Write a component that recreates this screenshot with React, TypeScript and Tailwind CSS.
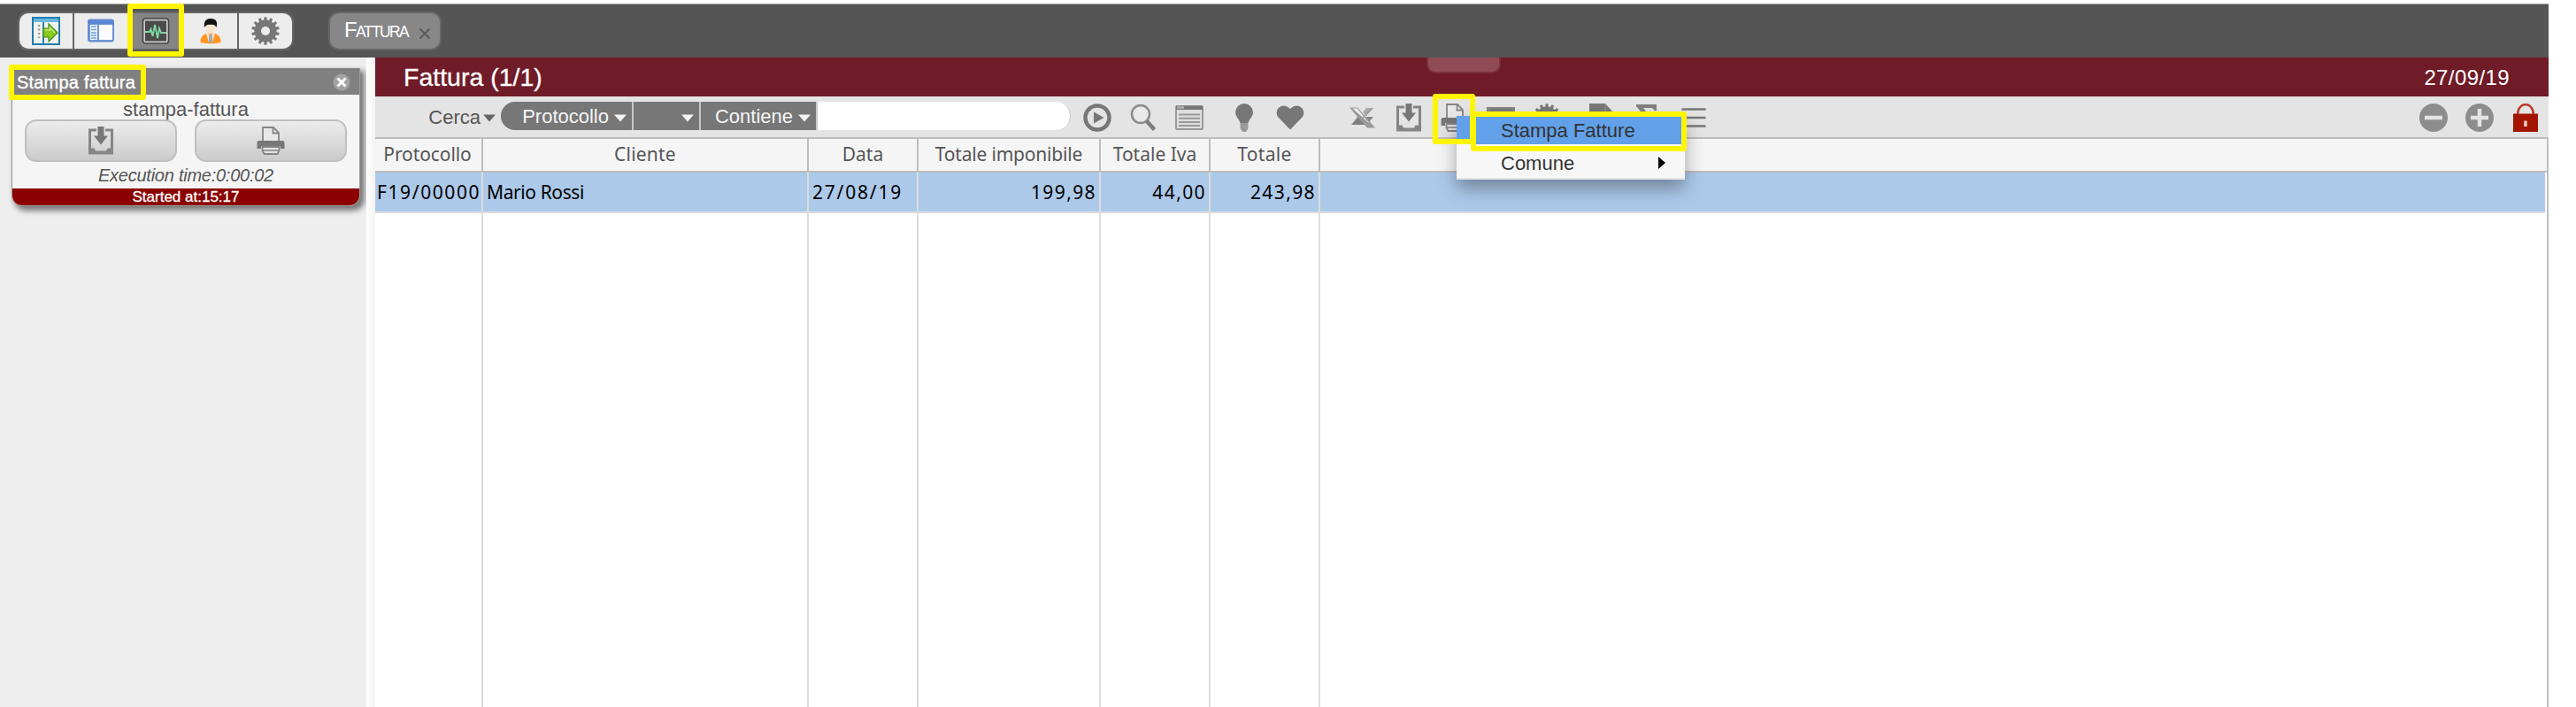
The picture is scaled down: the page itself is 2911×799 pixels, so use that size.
import React from "react";

const ARIAL = "font-['Liberation_Sans',Arial,sans-serif]";
const GRID = "font-['Noto_Sans','Open_Sans',sans-serif]";

function gearPath(teeth: number, outer: number, inner: number) {
  const pts: string[] = [];
  for (let i = 0; i < teeth; i++) {
    const step = (Math.PI * 2) / teeth;
    const a = i * step - Math.PI / 2;
    const corners: [number, number][] = [
      [-0.3, inner],
      [-0.2, outer],
      [0.2, outer],
      [0.3, inner],
    ];
    corners.forEach(([k, r]) => {
      pts.push(`${(16 + r * Math.cos(a + k * step)).toFixed(2)},${(16 + r * Math.sin(a + k * step)).toFixed(2)}`);
    });
  }
  return `M${pts.join("L")}Z`;
}

function Icon({ children, className = "" }: { children?: React.ReactNode; className?: string }) {
  return (
    <svg viewBox="0 0 32 32" className={`block h-8 w-8 shrink-0 ${className}`}>
      {children}
    </svg>
  );
}

const Gear = ({ hole = "#ededed" }: { hole?: string }) => (
  <Icon>
    <path d={gearPath(14, 15.8, 12.6)} fill="#777" />
    <circle cx="16" cy="16" r="5" fill={hole} />
  </Icon>
);

const Download = () => (
  <Icon>
    <path d="M2 2.500h9v3H5v19h3.500l1.500 3h12l1.500-3H27v-19h-6v-3h9v29H2Z" fill="#858585" />
    <path d="M12.500 0h7v10.500h4.500L16 20.500 8 10.500h4.500Z" fill="#777" />
  </Icon>
);

const Printer = () => (
  <Icon>
    <path d="M7 17V1h12l6 6v10" fill="#e9e9e9" stroke="#858585" strokeWidth="1.800" />
    <path d="M18.500 1v6.500H25" fill="none" stroke="#858585" strokeWidth="1.800" />
    <path d="M3 16h26a2.500 2.500 0 0 1 2.500 2.500V25h-4.500v-3H5v3H.5v-6.500A2.500 2.500 0 0 1 3 16Z" fill="#777" />
    <path d="M6.500 23h19v4l-2 4h-15l-2-4Z" fill="#e4e4e4" stroke="#858585" strokeWidth="1.800" />
    <path d="M7 27h18" stroke="#858585" strokeWidth="1.500" />
  </Icon>
);

const Caret = ({ className }: { className: string }) => (
  <svg viewBox="0 0 14 9" className={`block h-[9px] w-[14px] shrink-0 ${className}`}>
    <path d="M0 .5h14L7 8.500Z" fill="currentColor" />
  </svg>
);

function TopBar() {
  return (
    <header className="flex h-[61px] w-[2880px] border-t border-[#a8a8a8] bg-[#555] pl-5 pt-2">
      <div className="flex h-[44px] w-[312px] gap-[2px] overflow-hidden rounded-xl border-2 border-[#666] bg-[#666]">
        <div className="flex w-[60px] items-center justify-center bg-[#ededed]">
          <Icon>
            <rect x="1" y="1" width="30" height="30" fill="#f2f2f0" stroke="#207cad" strokeWidth="2" />
            <path d="M2 2h28v4H2Z" fill="#68b9e2" />
            <path d="M13 6v24" stroke="#2682b3" strokeWidth="2" />
            <path d="M8 9v15" stroke="#999" strokeWidth="2.500" strokeDasharray="2 2.500" />
            <path d="M13 13h6V8l10 10-10 10v-5h-6Z" fill="#8cc820" stroke="#3c8b13" strokeWidth="1.200" />
            <path d="M14.500 15h6v-3l5.500 6" fill="none" stroke="#c5e777" strokeWidth="1.500" />
          </Icon>
        </div>
        <div className="flex w-[60px] items-center justify-center bg-[#ededed]">
          <Icon>
            <rect x="1.500" y="3" width="29" height="25" rx="2" fill="#7095d2" stroke="#6289cb" strokeWidth="1" />
            <path d="M2 4h28v4H2Z" fill="#5a86d0" />
            <path d="M4 9h8v17H4Z" fill="#eef4fc" />
            <path d="M14 9h15v17H14Z" fill="#fafbfe" />
            <path d="M5 11h6M5 14.500h6M5 18h6M5 21h6M5 24h6" stroke="#6f9ed8" strokeWidth="1.500" />
          </Icon>
        </div>
        <div className="flex w-[60px] items-center justify-center bg-[#858585]">
          <Icon>
            <rect x="1.500" y="2" width="29" height="28" rx="3" fill="#ccc" stroke="#444" strokeWidth="1.600" />
            <rect x="4" y="4.500" width="24" height="23" fill="#4a4a4a" />
            <path d="M4 17h5l1.500-3 2 8L15 9l3 15 2-11 2 5h6" fill="none" stroke="#7fd6a0" strokeWidth="1.900" />
          </Icon>
        </div>
        <div className="flex w-[60px] items-center justify-center bg-[#ededed]">
          <Icon>
            <path d="M4.500 29c0-7 4-11 11.500-11s11.500 4 11.500 11Q16 31.500 4.500 29Z" fill="#ff951f" />
            <path d="m12 17 4 6 4-6 1 2-3 10h-4l-3-10Z" fill="#f5e6d8" />
            <path d="m14.500 20h3l1 9h-5Z" fill="#a5a9ae" />
            <ellipse cx="16" cy="12.500" rx="5.800" ry="7" fill="#f7e3cd" />
            <path d="M9 12C8 5 11 1.500 16.500 2 22 2 24.500 6 22.500 12 21 9 19 8.500 16 9c-3-.5-5 0-7 3Z" fill="#111" />
          </Icon>
        </div>
        <div className="flex w-[60px] items-center justify-center bg-[#ededed]">
          <Gear />
        </div>
      </div>
      <div className="ml-[39px] flex h-[44px] w-[128px] items-center rounded-xl border-2 border-[#666] bg-[#878787] pl-[16px] text-white">
        <span className="w-[74px] whitespace-nowrap text-[24px] leading-10 tracking-[-1.6px]">
          F<span className="text-[17.500px]">ATTURA</span>
        </span>
        <svg viewBox="0 0 14 14" className="ml-[10px] mt-[5px] block h-[14px] w-[14px] shrink-0">
          <path d="m1.500 1.500 11 11m0-11-11 11" stroke="#5b5b5b" strokeWidth="2" />
        </svg>
      </div>
    </header>
  );
}

function CardButton({ children }: { children: React.ReactNode }) {
  return (
    <button className="flex h-[48px] w-[172px] items-center justify-center rounded-[13px] border-2 border-[#bfbfbf] bg-linear-to-b from-[#ececec] to-[#cbcbcb]">
      {children}
    </button>
  );
}

function Sidebar() {
  return (
    <aside className="w-[414px] bg-[#eee] pl-[13px] pt-3">
      <section className="flex h-[156px] w-[394px] flex-col overflow-hidden rounded-b-[12px] border-x border-b border-[#999] bg-[#f5f5f5] shadow-[4px_4px_6px_1px_#777]">
        <div className="flex h-[30px] shrink-0 items-center justify-between bg-[#808080] pl-[5px] pr-[10px] pt-[2px]">
          <span className="whitespace-nowrap text-[20px] leading-[30px] tracking-[0.2px] text-white [-webkit-text-stroke:0.4px_white]">Stampa fattura</span>
          <svg viewBox="0 0 20 20" className="block h-5 w-5">
            <circle cx="10" cy="10" r="9.500" fill="#a2a2a2" />
            <path d="m5.500 5.500 9 9m0-9-9 9" stroke="#fff" strokeWidth="3" />
          </svg>
        </div>
        <div className="h-[28px] pt-[3px] text-center text-[22px] leading-[28px] text-[#555]">stampa-fattura</div>
        <div className="flex shrink-0 gap-5 pl-[14px]">
          <CardButton><Download /></CardButton>
          <CardButton><Printer /></CardButton>
        </div>
        <div className="h-[30px] text-center text-[20px] italic leading-[31px] tracking-[-0.25px] text-[#555]">Execution time:0:00:02</div>
        <div className="flex-1 bg-[#8b0000] text-center text-[17px] leading-[20px] text-white [-webkit-text-stroke:0.3px_white]">Started at:15:17</div>
      </section>
    </aside>
  );
}

function Toolbar() {
  const seg = "flex items-center justify-end bg-[#777] text-[22px] leading-8 text-[#f5f5f5]";
  return (
    <div className="flex h-[46px] shrink-0 items-start bg-[#e4e4e4] pt-[6px]">
      <div className="flex h-8 w-[142px] items-center justify-end pr-[6px] text-[22px] text-[#555]">
        <span className="mr-[3px] mt-[2px]">Cerca</span>
        <Caret className="mt-1 text-[#666]" />
      </div>
      <div className="flex h-8 w-[644px] gap-[2px] overflow-hidden rounded-full border-r border-[#c4c4c4] bg-[#c8c8c8]">
        <div className={`${seg} w-[148px] pr-[6px]`}>
          <span className="mr-[6px] mt-[2px]">Protocollo</span>
          <Caret className="mt-1" />
        </div>
        <div className={`${seg} w-[74px] pr-[6px]`}><Caret className="mt-1" /></div>
        <div className={`${seg} w-[130px] pr-[6px]`}>
          <span className="mr-[6px] mt-[2px]">Contiene</span>
          <Caret className="mt-1" />
        </div>
        <div className="flex-1 bg-white" />
      </div>
      <div className="mt-[2px] flex gap-5 pl-[14px]">
        <Icon>
          <circle cx="16" cy="16" r="13.500" fill="none" stroke="#777" strokeWidth="4.500" />
          <path d="M12 9.500v13L23.500 16Z" fill="#777" />
        </Icon>
        <Icon>
          <circle cx="13" cy="12" r="10" fill="#e9e9e9" stroke="#8c8c8c" strokeWidth="2.500" />
          <path d="m20 20 8.500 9.500" stroke="#7c7c7c" strokeWidth="4.500" />
        </Icon>
        <Icon>
          <rect x="1" y="3" width="30" height="26" rx="1" fill="#dedede" stroke="#999" strokeWidth="2" />
          <path d="M1 2.500h30v4.500H1Z" fill="#777" />
          <path d="M2 3h8v3H2Z" fill="#aaa" />
          <path d="M4 12.500h24M4 16.700h24M4 20.900h24M4 25h24" stroke="#999" strokeWidth="2" />
        </Icon>
      </div>
      <div className="mt-[2px] flex gap-5 pl-[30px]">
        <Icon>
          <path d="M16 0a10 10 0 0 1 10 10c0 5-4.500 7.500-5.500 12h-9C10.500 17.500 6 15 6 10A10 10 0 0 1 16 0Z" fill="#777" />
          <path d="M11.500 22h9v6l-2.500 4h-4l-2.500-4Z" fill="#999" />
        </Icon>
        <Icon>
          <path d="M16 29.500 2 15C-3 7 7-3 16 6c9-9 19 1 14 9Z" fill="#777" />
        </Icon>
      </div>
      <div className="mt-[2px] flex gap-5 pl-[50px]">
        <Icon>
          <path d="M3 24 12 13l9 11Z" fill="#808080" />
          <path d="M20 5h8l-8 9-4-4Z" fill="#aaa" />
          <path d="M18 15h10l-5 6Z" fill="#888" />
          <path d="M1 4.500h9L30 27.500h-9Z" fill="#999" />
          <path d="M4.500 5.500h5L24 23Z" fill="#eee" />
          <path d="M27 5 13 19" stroke="#999" strokeWidth="1.500" />
        </Icon>
        <Download />
        <Printer />
        <Icon>
          <path d="M0 4h32v24H0Z" fill="#858585" />
          <path d="M3 7h26" stroke="#777" strokeWidth="2" />
        </Icon>
        <Gear hole="#e4e4e4" />
      </div>
      <div className="mt-[2px] flex gap-[21px] pl-[28px]">
        <Icon>
          <path d="M4 0h18l9 10v22H4Z" fill="#777" />
          <path d="M22 1v9h8" fill="none" stroke="#999" />
        </Icon>
        <Icon>
          <path d="M4 1h23v7h-3q0-3-4-3H12l8 10-9 11h10q4 0 5-4h2v9H4v-3l10-13L4 3Z" fill="#808080" />
        </Icon>
        <Icon>
          <path d="M3.500 6.500h25M3.500 16h25M3.500 25.500h25" stroke="#777" strokeWidth="2.700" strokeLinecap="round" />
        </Icon>
      </div>
      <div className="ml-auto mt-[2px] flex gap-5 pr-[10px]">
        <Icon>
          <circle cx="16" cy="16" r="16" fill="#8d8d8d" />
          <path d="M6 16h20" stroke="#e4e4e4" strokeWidth="4.500" />
        </Icon>
        <Icon>
          <circle cx="16" cy="16" r="16" fill="#8d8d8d" />
          <path d="M6 16h20M16 6v20" stroke="#e4e4e4" strokeWidth="4.500" />
        </Icon>
        <Icon>
          <path d="M7 13c0-16 18-16 18 0" fill="none" stroke="#b93a2b" strokeWidth="2.500" />
          <path d="M2 11.500h28V32H2Z" fill="#a31500" />
          <path d="M14.200 19.500h3.500V26h-3.500Z" fill="#ead0cc" />
        </Icon>
      </div>
    </div>
  );
}

const columns = [
  { w: "w-[122px]", head: "Protocollo", cell: "F19/00000", headCls: "tracking-[-0.1px] pr-[2px]", cls: "pl-[2px] tracking-[1.6px]" },
  { w: "w-[368px]", head: "Cliente", cell: "Mario Rossi", headCls: "tracking-[0.2px]", cls: "pl-[4px] tracking-[-0.4px]" },
  { w: "w-[124px]", head: "Data", cell: "27/08/19", headCls: "", cls: "pl-[4px] tracking-[1.8px]" },
  { w: "w-[206px]", head: "Totale imponibile", cell: "199,98", headCls: "tracking-[-0.2px]", cls: "text-right pr-[3px] tracking-[1.4px]" },
  { w: "w-[124px]", head: "Totale Iva", cell: "44,00", headCls: "", cls: "text-right pr-[3px] tracking-[1.4px]" },
  { w: "w-[124px]", head: "Totale", cell: "243,98", headCls: "tracking-[0.3px]", cls: "text-right pr-[3px] tracking-[1.4px]" },
];

function Grid() {
  return (
    <div className={`flex flex-1 flex-col border-r-2 border-t-2 border-r-[#c0c0c0] border-t-[#bdbdbd] bg-white text-[21px] ${GRID}`}>
      <div className="flex h-[38px] border-b-2 border-[#bdbdbd] bg-[#f5f5f5] text-[#555]">
        {columns.map((c) => (
          <div key={c.head} className={`${c.w} ${c.headCls} shrink-0 whitespace-nowrap border-r-2 border-[#bdbdbd] text-center leading-[34px]`}>
            {c.head}
          </div>
        ))}
      </div>
      <div className="mr-[2px] flex h-[46px] border-b-2 border-[#dcdcdc] bg-[#adc9ea] text-black">
        {columns.map((c) => (
          <div key={c.head} className={`${c.w} ${c.cls} shrink-0 whitespace-nowrap border-r-2 border-[#dcdcdc] leading-[45px]`}>
            {c.cell}
          </div>
        ))}
      </div>
      <div className="mr-[2px] flex flex-1">
        {columns.map((c) => (
          <div key={c.head} className={`${c.w} shrink-0 border-r-2 border-[#dcdcdc]`} />
        ))}
      </div>
    </div>
  );
}

function PrintMenu() {
  return (
    <div className="absolute left-[1646px] top-[131px] flex h-[72px] w-[258px] flex-col border-b-2 border-[#e6e6e6] bg-[#f7f7f7] text-[22px] text-[#333] shadow-[0_10px_20px_rgba(0,0,0,0.35)]">
      <div className="h-8 bg-[#62a0ea] pl-[50px] leading-[33px]">Stampa Fatture</div>
      <div className="mb-px mt-[2px] h-[2px] bg-[#bbb]" />
      <div className="flex flex-1 items-center justify-between pl-[50px] pr-[22px]">
        <span className="mt-[2px]">Comune</span>
        <svg viewBox="0 0 8 14" className="block h-[14px] w-2">
          <path d="M0 0v14l8-7Z" fill="#000" />
        </svg>
      </div>
    </div>
  );
}

const mark = "pointer-events-none absolute rounded-[3px] border-6 border-[#fff500]";

export default function App() {
  return (
    <div className={`relative flex h-[799px] w-[2911px] flex-col overflow-hidden bg-white pt-1 ${ARIAL}`}>
      <TopBar />
      <div className="flex w-[2880px] flex-1">
        <Sidebar />
        <div className="w-[10px] bg-linear-to-r from-white to-[#f3f3f3]" />
        <main className="flex flex-1 flex-col">
          <div className="relative flex h-[44px] shrink-0 items-center justify-between bg-[#701b28] pl-[32px] pr-[44px] pt-px text-white">
            <h1 className="text-[28.500px] tracking-[0px] [-webkit-text-stroke:0.3px_white]">Fattura (1/1)</h1>
            <span className="text-[24px] tracking-[0.4px]">27/09/19</span>
            <div className="absolute left-[1188px] top-0 h-[18px] w-[84px] rounded-b-[10px] border-x-2 border-b-2 border-[#7c303c] bg-[#904b56]" />
          </div>
          <Toolbar />
          <Grid />
        </main>
      </div>
      <PrintMenu />
      <div className={`${mark} left-[144px] top-[4px] h-[60px] w-[64px]`} />
      <div className={`${mark} left-[10px] top-[73px] h-[40px] w-[155px]`} />
      <div className={`${mark} left-[1619px] top-[106px] h-[57px] w-[48px]`} />
      <div className={`${mark} left-[1662px] top-[126px] h-[45px] w-[244px]`} />
    </div>
  );
}
